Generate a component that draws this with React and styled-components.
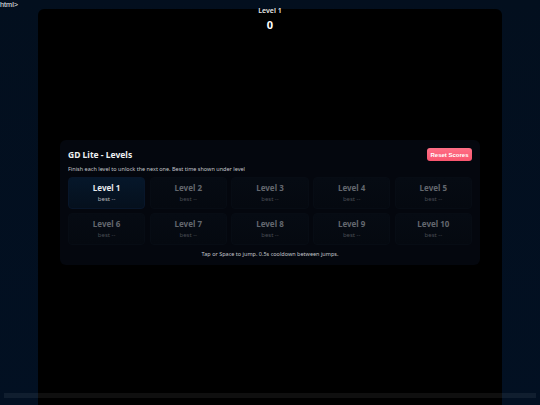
import React from "react";
import styled, { createGlobalStyle } from "styled-components";

const GlobalStyle = createGlobalStyle`
  html, body {
    margin: 0;
    height: 100%;
    overflow: hidden;
  }
  body {
    background: linear-gradient(180deg, #030f1e 0%, #021022 100%);
    font-family: "Noto Sans", "Open Sans", sans-serif;
  }
`;

const levels = [1, 2, 3, 4, 5, 6, 7, 8, 9, 10];

const Page = styled.div`
  position: relative;
  width: 540px;
  height: 405px;
  overflow: hidden;
`;

const StrayText = styled.div`
  position: absolute;
  top: 0;
  left: 0;
  font-family: "Liberation Sans", Arial, sans-serif;
  font-size: 7.3px;
  line-height: 9px;
  color: #eef0f2;
`;

const Stage = styled.main`
  margin: 9px 38px 0;
  height: 396px;
  background: #000;
  border-radius: 6px 6px 0 0;
  display: flex;
  flex-direction: column;
  align-items: center;
`;

const Hud = styled.header`
  position: absolute;
  top: 6px;
  left: 0;
  right: 0;
  display: flex;
  flex-direction: column;
  align-items: center;
  color: #fff;
`;

const HudLevel = styled.div`
  font-size: 7px;
  line-height: 9px;
  font-weight: 600;
  color: #e6e8ea;
`;

const HudScore = styled.div`
  margin-top: 1px;
  font-size: 11px;
  line-height: 17px;
  font-weight: 700;
`;

const Panel = styled.section`
  margin-top: 131px;
  width: 404px;
  height: 109px;
  padding: 8px;
  background: #04070e;
  border-radius: 6px;
  display: flex;
  flex-direction: column;
`;

const PanelHead = styled.div`
  display: flex;
  align-items: center;
  justify-content: space-between;
  height: 13px;
`;

const Title = styled.h2`
  margin: 0;
  font-size: 8.5px;
  line-height: 13px;
  font-weight: 700;
  color: #eef0f2;
`;

const ResetButton = styled.button`
  height: 13px;
  width: 45px;
  padding: 0;
  border: none;
  border-radius: 3px;
  background: linear-gradient(180deg, #ff6f86 0%, #f9566f 100%);
  color: #fff;
  font-family: "Liberation Sans", Arial, sans-serif;
  font-size: 6px;
  font-weight: 700;
`;

const Intro = styled.p`
  margin: 4px 0 0;
  font-size: 5.5px;
  line-height: 8px;
  color: #c3c6ca;
`;

const LevelGrid = styled.div`
  margin-top: 4px;
  display: grid;
  grid-template-columns: repeat(5, 77.2px);
  grid-auto-rows: 32px;
  gap: 4px 4.5px;
`;

const LevelCard = styled.button`
  padding: 0 0 1px;
  border: 1px solid ${(props) => (props.$unlocked ? "#08162a" : "#070c14")};
  border-radius: 4px;
  background: ${(props) =>
    props.$unlocked
      ? "linear-gradient(180deg, #06172a 0%, #05101d 100%)"
      : "linear-gradient(180deg, #060b13 0%, #050910 100%)"};
  font-family: inherit;
  display: flex;
  flex-direction: column;
  align-items: center;
  justify-content: center;
`;

const LevelName = styled.span`
  font-size: 8px;
  line-height: 11px;
  font-weight: 700;
  color: ${(props) => (props.$unlocked ? "#e8ebee" : "#63676e")};
`;

const LevelBest = styled.span`
  margin-top: 2px;
  font-size: 6px;
  line-height: 8px;
  color: ${(props) => (props.$unlocked ? "#b5b8bc" : "#484c53")};
`;

const Hint = styled.p`
  margin: 5px 0 0;
  font-size: 5.5px;
  line-height: 8px;
  text-align: center;
  color: #c3c6ca;
`;

const BottomBar = styled.div`
  position: absolute;
  left: 4px;
  right: 4px;
  bottom: 7px;
  height: 5px;
  background: rgba(255, 255, 255, 0.06);
`;

const App = () => (
  <Page>
    <GlobalStyle />
    <StrayText>html&gt;</StrayText>
    <Stage>
      <Hud>
        <HudLevel>Level 1</HudLevel>
        <HudScore>0</HudScore>
      </Hud>
      <Panel>
        <PanelHead>
          <Title>GD Lite - Levels</Title>
          <ResetButton>Reset Scores</ResetButton>
        </PanelHead>
        <Intro>
          Finish each level to unlock the next one. Best time shown under level
        </Intro>
        <LevelGrid>
          {levels.map((level) => (
            <LevelCard key={level} $unlocked={level === 1}>
              <LevelName $unlocked={level === 1}>Level {level}</LevelName>
              <LevelBest $unlocked={level === 1}>best --</LevelBest>
            </LevelCard>
          ))}
        </LevelGrid>
        <Hint>Tap or Space to jump. 0.5s cooldown between jumps.</Hint>
      </Panel>
    </Stage>
    <BottomBar />
  </Page>
);

export default App;
